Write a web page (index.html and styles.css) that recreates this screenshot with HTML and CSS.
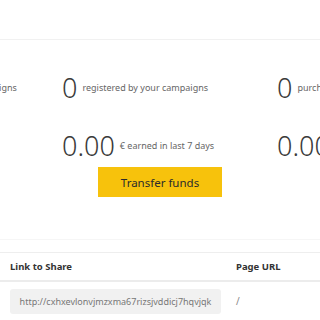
FILE: index.html
```html
<!DOCTYPE html>
<html>
<head>
    <title>Affiliate dashboard</title>
    <link rel="stylesheet" href="styles.css">
</head>
<body>
    <div class="topbar"></div>
    <div class="stats">
        <div class="stat-row">
            <div class="stat">
                <span class="num">0</span>
                <span class="label">visitors brought by your campaigns</span>
            </div>
            <div class="stat">
                <span class="num">0</span>
                <span class="label">registered by your campaigns</span>
            </div>
            <div class="stat">
                <span class="num">0</span>
                <span class="label">purchases by your campaigns</span>
            </div>
        </div>
        <div class="stat-row second">
            <div class="stat"></div>
            <div class="stat">
                <span class="num">0.00</span>
                <span class="label">€ earned in last 7 days</span>
            </div>
            <div class="stat">
                <span class="num">0.00</span>
                <span class="label">€ earned in total</span>
            </div>
        </div>
        <div class="stat-row actions">
            <div class="stat"></div>
            <div class="stat">
                <button class="transfer">Transfer funds</button>
            </div>
            <div class="stat"></div>
        </div>
    </div>
    <div class="spacer"></div>
    <table class="links">
        <thead>
            <tr>
                <th class="col-link">Link to Share</th>
                <th>Page URL</th>
            </tr>
        </thead>
        <tbody>
            <tr>
                <td class="col-link"><div class="share">http://cxhxevlonvjmzxma67rizsjvddicj7hqvjqk</div></td>
                <td class="page">/</td>
            </tr>
        </tbody>
    </table>
</body>
</html>
```

FILE: styles.css
```css
body {
    font-family: 'Noto Sans', 'Open Sans', sans-serif;
    background-color: #fff;
    color: #333;
    margin: 0;
    padding: 0;
    overflow: hidden;
}
.topbar {
    height: 39px;
    border-bottom: 1px solid #f1f1f1;
}
.stats {
    padding-top: 29px;
}
.stat-row {
    display: grid;
    grid-template-columns: 215px 215px 215px;
    margin-left: -153px;
    height: 24px;
}
.stat-row.second {
    margin-top: 34px;
}
.stat-row.actions {
    margin-top: 16px;
    height: auto;
}
.stat {
    display: flex;
    align-items: center;
    white-space: nowrap;
}
.num {
    font-size: 27px;
    font-weight: 300;
    color: #3a3a3a;
    margin-right: 5px;
}
.label {
    font-size: 9px;
    color: #666;
}
.transfer {
    margin-left: 36px;
    width: 124px;
    height: 30px;
    background-color: #f7c20c;
    color: #2b2b2b;
    border: none;
    font-family: inherit;
    font-size: 11.5px;
    cursor: pointer;
}
.spacer {
    margin-top: 42px;
    height: 12px;
    border-top: 1px solid #f6f6f6;
}
.links {
    width: 100%;
    border-collapse: collapse;
    border-top: 1px solid #eee;
}
.links th {
    text-align: left;
    font-size: 9.5px;
    font-weight: bold;
    color: #333;
    padding: 0 10px;
    height: 27px;
    border-bottom: 2px solid #ececec;
}
.links td {
    padding: 7px 10px 0 10px;
    vertical-align: top;
}
.col-link {
    width: 206px;
}
.share {
    background-color: #f1f1f1;
    border-radius: 3px;
    width: 211px;
    height: 25px;
    line-height: 25px;
    font-size: 9px;
    color: #777;
    text-align: center;
    box-sizing: border-box;
    margin-right: -5px;
}
.page {
    font-size: 10px;
    color: #888;
    line-height: 25px;
}
```
